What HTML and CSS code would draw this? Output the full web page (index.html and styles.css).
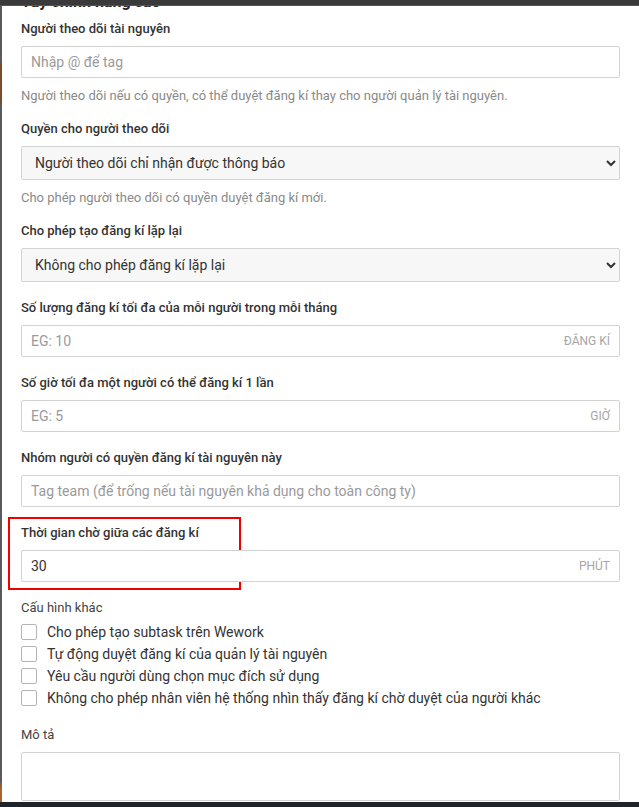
FILE: index.html
```html
<!DOCTYPE html>
<html lang="vi">
<head>
<meta charset="utf-8">
<title>Tùy chỉnh nâng cao</title>
<link rel="stylesheet" href="styles.css">
</head>
<body>
<div class="topbar"></div>
<div class="leftstrip"></div>
<main class="content">
  <h2 class="heading">Tùy chỉnh nâng cao</h2>

  <div class="group with-hint">
    <label class="label">Người theo dõi tài nguyên</label>
    <div class="field"><input class="input" type="text" placeholder="Nhập @ để tag"></div>
    <p class="hint">Người theo dõi nếu có quyền, có thể duyệt đăng kí thay cho người quản lý tài nguyên.</p>
  </div>

  <div class="group with-hint">
    <label class="label">Quyền cho người theo dõi</label>
    <select class="select">
      <option>Người theo dõi chỉ nhận được thông báo</option>
    </select>
    <p class="hint">Cho phép người theo dõi có quyền duyệt đăng kí mới.</p>
  </div>

  <div class="group">
    <label class="label">Cho phép tạo đăng kí lặp lại</label>
    <select class="select">
      <option>Không cho phép đăng kí lặp lại</option>
    </select>
  </div>

  <div class="group">
    <label class="label">Số lượng đăng kí tối đa của mỗi người trong mỗi tháng</label>
    <div class="field"><input class="input" type="text" placeholder="EG: 10"><span class="suffix">ĐĂNG KÍ</span></div>
  </div>

  <div class="group">
    <label class="label">Số giờ tối đa một người có thể đăng kí 1 lần</label>
    <div class="field"><input class="input" type="text" placeholder="EG: 5"><span class="suffix">GIỜ</span></div>
  </div>

  <div class="group">
    <label class="label">Nhóm người có quyền đăng kí tài nguyên này</label>
    <div class="field"><input class="input" type="text" placeholder="Tag team (để trống nếu tài nguyên khả dụng cho toàn công ty)"></div>
  </div>

  <div class="group marked">
    <div class="highlight"></div>
    <label class="label">Thời gian chờ giữa các đăng kí</label>
    <div class="field"><input class="input" type="text" value="30"><span class="suffix">PHÚT</span></div>
  </div>

  <div class="group">
    <div class="label plain">Cấu hình khác</div>
    <ul class="checks">
      <li class="check"><span class="box"></span>Cho phép tạo subtask trên Wework</li>
      <li class="check"><span class="box"></span>Tự động duyệt đăng kí của quản lý tài nguyên</li>
      <li class="check"><span class="box"></span>Yêu cầu người dùng chọn mục đích sử dụng</li>
      <li class="check"><span class="box"></span>Không cho phép nhân viên hệ thống nhìn thấy đăng kí chờ duyệt của người khác</li>
    </ul>
  </div>

  <div class="group">
    <label class="label plain">Mô tả</label>
    <textarea class="textarea"></textarea>
  </div>
</main>
<div class="bottombar"></div>
</body>
</html>
```

FILE: styles.css
```css
html, body {
  margin: 0;
  padding: 0;
  height: 100%;
  overflow: hidden;
  background: #ffffff;
}

body {
  font-family: Roboto, "Noto Sans", "Liberation Sans", sans-serif;
  color: #333333;
  font-size: 14px;
}

.topbar {
  position: fixed;
  top: 0;
  left: 0;
  right: 0;
  height: 5px;
  background: #3a3a3a;
  border-bottom: 1px solid #555555;
  z-index: 5;
}

.bottombar {
  position: fixed;
  bottom: 0;
  left: 0;
  right: 0;
  height: 5px;
  background: #1f242b;
  z-index: 5;
}

.leftstrip {
  position: fixed;
  top: 0;
  bottom: 0;
  left: 0;
  width: 2px;
  background: linear-gradient(to bottom, #5a5a5a 0, #5a5a5a 60px, #7a4a2a 65px, #7a4a2a 100px, #5a5a5a 105px, #5a5a5a 780px, #b0642a 790px);
  z-index: 4;
}

.content {
  padding: 0 19px 0 21px;
}

.heading {
  margin: -8px 0 8px 0;
  font-size: 16px;
  line-height: 20px;
  font-weight: 700;
  color: #222222;
}

.group {
  margin-bottom: 17px;
  position: relative;
}

.group.with-hint {
  margin-bottom: 15px;
}

.label {
  display: block;
  font-size: 13px;
  line-height: 18px;
  font-weight: 500;
  color: #333333;
  margin-bottom: 8px;
}

.label.plain {
  font-weight: 400;
  color: #444444;
}

.field {
  position: relative;
}

.input {
  display: block;
  box-sizing: border-box;
  width: 100%;
  height: 32px;
  border: 1px solid #d3d3d3;
  border-radius: 2px;
  padding: 0 9px;
  font-family: inherit;
  font-size: 14px;
  color: #333333;
  background: #ffffff;
  outline: none;
}

.input::placeholder {
  color: #9a9a9a;
}

.suffix {
  position: absolute;
  right: 10px;
  top: 0;
  line-height: 32px;
  font-size: 12px;
  color: #a5a5a5;
}

.select {
  display: block;
  box-sizing: border-box;
  width: 100%;
  height: 34px;
  border: 1px solid #d3d3d3;
  border-radius: 2px;
  padding: 0 9px;
  font-family: inherit;
  font-size: 14px;
  color: #333333;
  background-color: #f7f7f7;
  outline: none;
}

.hint {
  margin: 9px 0 0 0;
  font-size: 13px;
  line-height: 18px;
  color: #8a8a8a;
}

.highlight {
  position: absolute;
  left: -13px;
  top: -7px;
  width: 233px;
  height: 73px;
  box-sizing: border-box;
  border: 2px solid #f00000;
  pointer-events: none;
}

.checks {
  list-style: none;
  margin: -4px 0 0 0;
  padding: 0;
}

.check {
  display: flex;
  align-items: center;
  height: 22px;
  font-size: 14px;
  color: #333333;
}

.box {
  box-sizing: border-box;
  width: 16px;
  height: 16px;
  border: 1px solid #b5b5b5;
  border-radius: 2px;
  background: #ffffff;
  margin-right: 10px;
  flex: none;
}

.textarea {
  display: block;
  box-sizing: border-box;
  width: 100%;
  height: 49px;
  border: 1px solid #d3d3d3;
  border-radius: 2px;
  resize: none;
  font-family: inherit;
  outline: none;
}
```
